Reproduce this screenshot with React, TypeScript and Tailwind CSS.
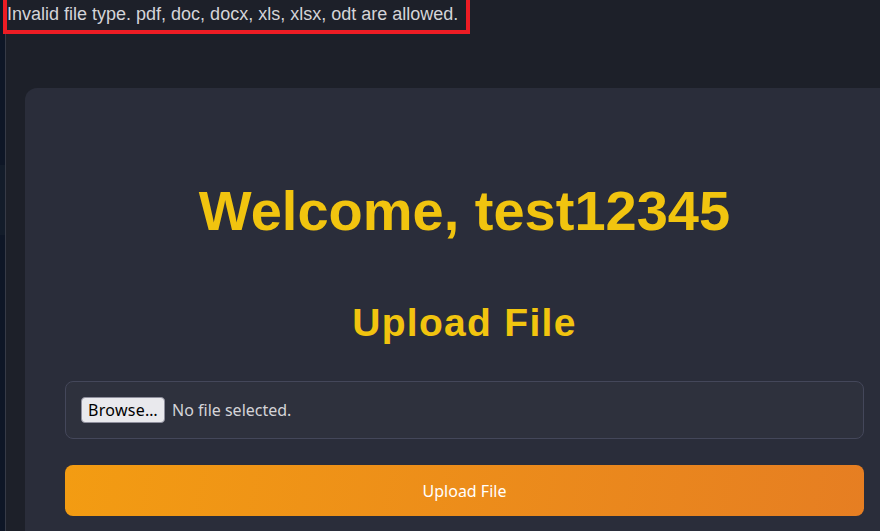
export default function App() {
  return (
    <div className="relative flex h-[531px] w-[880px] overflow-hidden bg-[#1d2029]">
      <aside className="flex w-[6px] shrink-0 flex-col border-r border-[#363a46] bg-[#0e1626]">
        <div className="h-[165px]" />
        <div className="h-[70px] bg-[#131c2a]" />
      </aside>
      <main className="relative flex min-w-0 flex-1 flex-col">
        <p className="pl-[1px] pt-[3px] font-['Liberation_Sans',Arial,sans-serif] text-[18px] leading-[22px] text-[#d4d4d8]">
          Invalid file type. pdf, doc, docx, xls, xlsx, odt are allowed.
        </p>
        <div className="ml-[19px] mt-[63px] w-[879px] shrink-0 rounded-[12px] bg-[#2a2d3a] px-[40px] pb-10 pt-[91px]">
          <h1 className="text-center font-['Liberation_Sans',Arial,sans-serif] text-[56px] font-bold leading-[64px] text-[#f1c40f]">
            Welcome, test12345
          </h1>
          <h2 className="mt-[57px] text-center font-['Liberation_Sans',Arial,sans-serif] text-[39px] font-bold leading-[45px] tracking-[1.3px] text-[#f1c40f]">
            Upload File
          </h2>
          <form className="mt-[36px] flex flex-col gap-[26px] font-['Noto_Sans',sans-serif] text-[16px]">
            <label className="flex items-center gap-[7px] rounded-[8px] border border-[#44475a] bg-[#2e313d] p-[15px]">
              <span className="flex h-[26px] w-[84px] items-center justify-center rounded-[4px] border border-[#8f8f9d] bg-[#e9e9ed] tracking-[0.3px] text-black">Browse…</span>
              <span className="text-[#d4d4d8]">No file selected.</span>
              <input className="hidden" type="file" />
            </label>
            <button className="h-[51px] rounded-[8px] bg-[linear-gradient(100deg,#f39c12,#e67e22)] text-white" type="button">
              Upload File
            </button>
          </form>
        </div>
      </main>
      <div className="absolute left-[3px] top-[-4px] h-[38px] w-[467px] border-4 border-[#ec1c24]" />
    </div>
  );
}
